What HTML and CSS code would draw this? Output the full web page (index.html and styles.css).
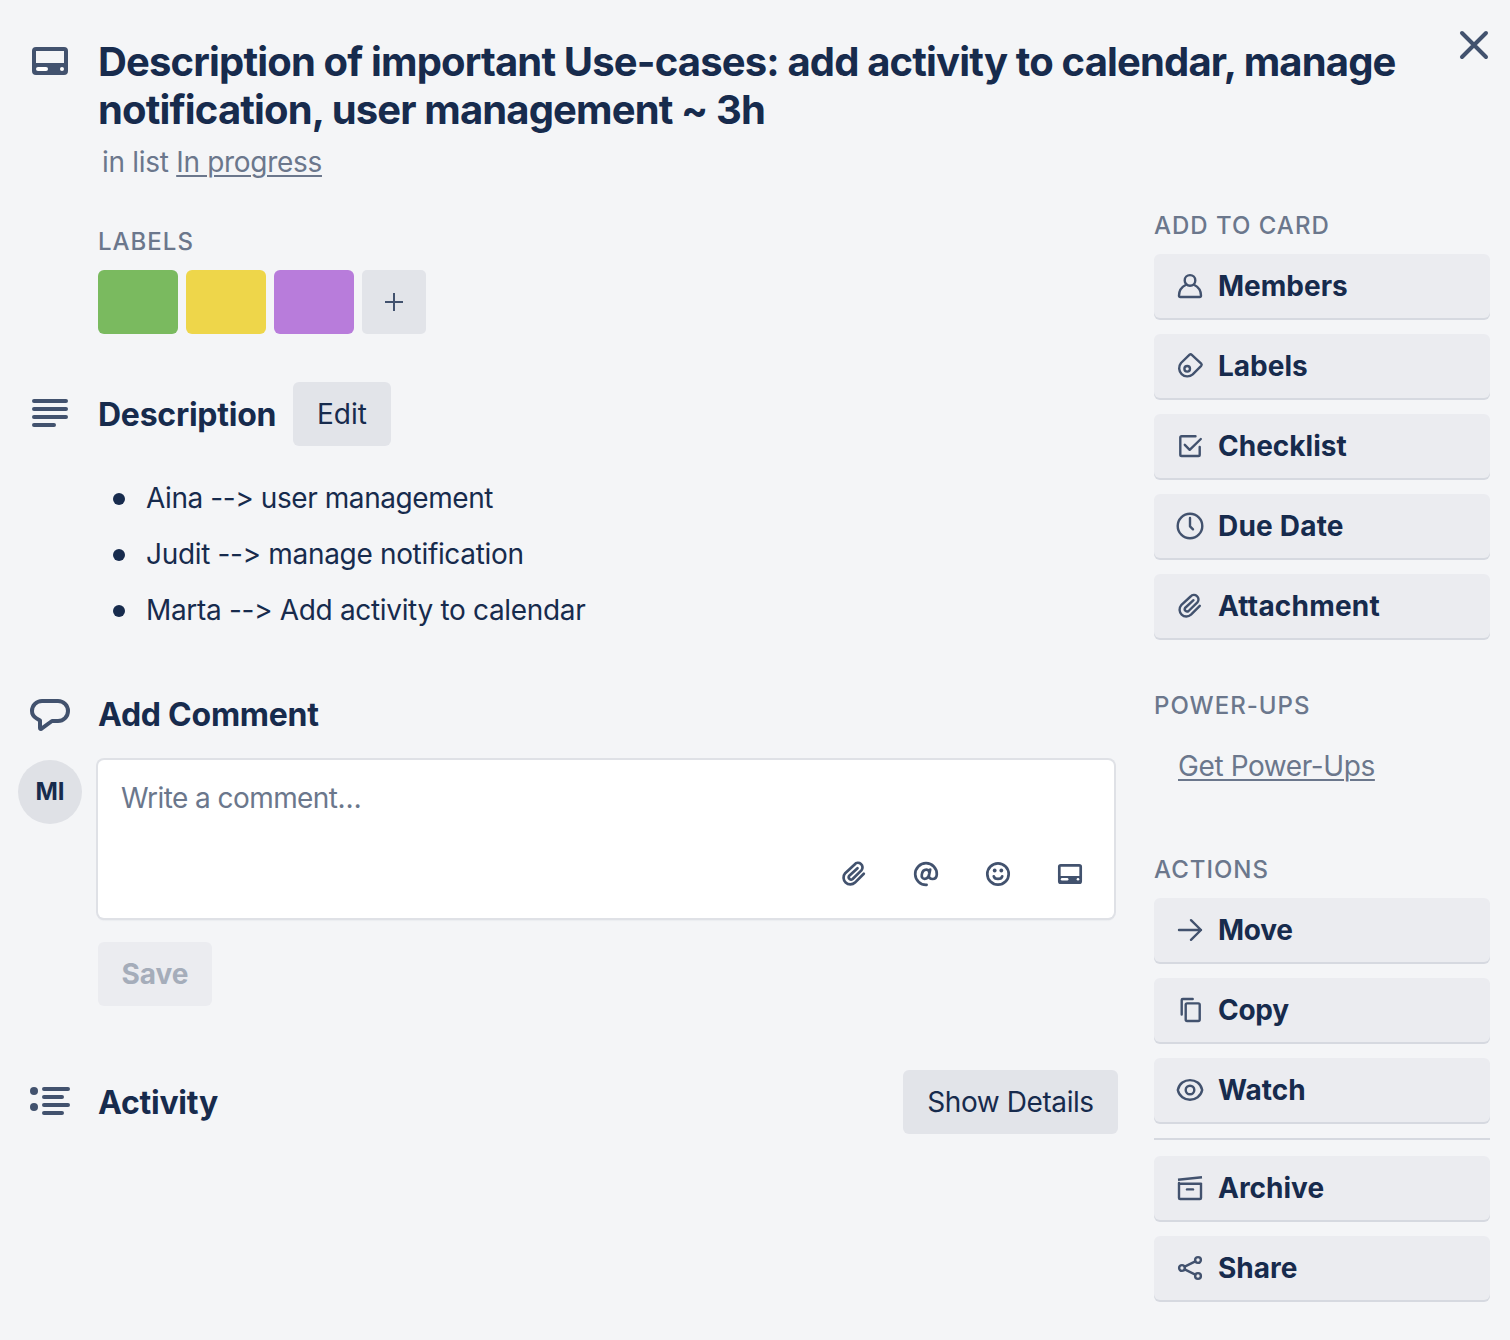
FILE: index.html
```html
<!DOCTYPE html>
<html lang="en">
<head>
<meta charset="utf-8">
<title>Card details</title>
<link rel="stylesheet" href="styles.css">
</head>
<body>
<svg class="sprite" aria-hidden="true">
  <symbol id="clip" viewBox="0 0 32 32"><path d="M25.8 15.8 17 24.6A6.8 6.8 0 0 1 7.2 15.2L16.6 6.5A4.5 4.5 0 0 1 23.4 12.4L14.6 21A2.4 2.4 0 0 1 11 18L19.5 10.2"/></symbol>
</svg>
<div class="card">
  <header class="header">
    <svg class="icon-lg" viewBox="0 0 48 48"><rect x="8" y="11" width="32" height="24" rx="2"/><path class="fill" d="M8 25h32v10H8z"/><path class="cut" d="M12 31h8"/><circle class="hole" cx="36" cy="31" r="2"/></svg>
    <div class="heading">
      <h1 class="title"><span class="line-a">Description of important Use-cases: add activity to calendar, manage</span> <br><span class="line-b">notification, user management ~ 3h</span></h1>
      <p class="in-list">in list <a class="link">In progress</a></p>
    </div>
    <svg class="close" viewBox="0 0 32 32"><path d="M4 4 28 28M28 4 4 28"/></svg>
  </header>
  <div class="columns">
    <main class="main">
      <section class="labels">
        <h3 class="caption">LABELS</h3>
        <div class="swatches">
          <span class="swatch green"></span><span class="swatch yellow"></span><span class="swatch purple"></span>
          <button class="add"><svg viewBox="0 0 32 32"><path d="M16 7V25M7 16H25"/></svg></button>
        </div>
      </section>
      <section class="description">
        <div class="section-head">
          <svg class="icon-lg" viewBox="0 0 48 48"><path d="M8 11H40M8 19H40M8 27H40M8 35H28"/></svg>
          <h2 class="h-desc">Description</h2>
          <button class="btn edit">Edit</button>
        </div>
        <ul class="list">
          <li><span class="li-a">Aina --&gt; user management</span></li>
          <li><span>Judit --&gt; manage notification</span></li>
          <li><span>Marta --&gt; Add activity to calendar</span></li>
        </ul>
      </section>
      <section class="comment">
        <div class="section-head">
          <svg class="icon-lg" viewBox="0 0 48 48"><path d="M16 11H32A10 10 0 0 1 32 31H26L15.2 38.8Q14 39.2 14 38V30.5L10.5 28.4C7.5 26.6 6 24 6 21A10 10 0 0 1 16 11Z"/></svg>
          <h2>Add Comment</h2>
        </div>
        <div class="comment-row">
          <span class="avatar">MI</span>
          <div class="editor">
            <p class="placeholder">Write a comment…</p>
            <div class="tools">
              <svg class="icon bold"><use href="#clip"/></svg>
              <svg class="icon bold" viewBox="0 0 32 32"><path d="M16.6 26.8A10.8 10.8 0 1 1 26.8 16.4C26.6 19.6 24.8 21 22.6 21C20 21 18.6 19.6 19 17.4L20.2 11.6M19.2 16C18.6 19 16.6 20.8 14.6 20.8C12.4 20.8 11.4 19 11.8 16.6C12.2 13.6 14 11.6 16.4 11.6C18.6 11.6 19.6 13.4 19.2 16Z"/></svg>
              <svg class="icon bold" viewBox="0 0 32 32"><circle cx="16" cy="16" r="10.7"/><circle class="dot" cx="12.7" cy="12.5" r="1.9"/><circle class="dot" cx="19.3" cy="12.5" r="1.9"/><path d="M11.8 18.4C12.6 21.8 19.4 21.8 20.2 18.4"/></svg>
              <svg class="icon bold" viewBox="0 0 32 32"><rect x="5.3" y="7.3" width="21.4" height="17.4" rx="1.5"/><path class="fill" d="M5.3 18h21.4v6.7H5.3z"/><path class="cut thin" d="M8 21.3h5.2"/><circle class="hole" cx="24" cy="21.3" r="1.3"/></svg>
            </div>
          </div>
        </div>
        <button class="btn save">Save</button>
      </section>
      <section class="activity section-head">
        <svg class="icon-lg" viewBox="0 0 48 48"><path d="M20 11H42M20 19H36M20 27H42M20 35H36M20 11h-2M20 19h-2M20 27h-2M20 35h-2"/><circle class="dot" cx="8" cy="13" r="4"/><circle class="dot" cx="8" cy="29" r="4"/></svg>
        <h2>Activity</h2>
        <button class="btn details">Show Details</button>
      </section>
    </main>
    <aside class="side">
      <h3 class="caption">ADD TO CARD</h3>
      <div class="stack">
        <button class="action"><svg class="icon" viewBox="0 0 32 32"><circle cx="16" cy="10.4" r="5.3"/><path d="M12 14.8C8 16.8 5 21 5 25.6Q5 27 6.4 27H25.6Q27 27 27 25.6C27 21 24 16.8 20 14.8"/></svg><span>Members</span></button>
        <button class="action"><svg class="icon" viewBox="0 0 32 32"><path d="M7 13 15.6 4.7Q16.7 3.8 17.8 4.8L27.2 13.6Q28.2 14.7 27.2 15.8L18.7 24.4A8.2 8.2 0 0 1 7 13Z"/><circle cx="13.2" cy="18.8" r="2.8"/></svg><span>Labels</span></button>
        <button class="action"><svg class="icon" viewBox="0 0 32 32"><path d="M21.5 6.3H7.6Q6.3 6.3 6.3 7.6V24.7Q6.3 26 7.6 26H24.4Q25.7 26 25.7 24.7V17M10.8 14.8 15.7 19.8 26.8 9"/></svg><span>Checklist</span></button>
        <button class="action wide"><svg class="icon" viewBox="0 0 32 32"><circle cx="16" cy="16" r="12.3"/><path d="M16 8V16.3L19 19.3"/></svg><span>Due Date</span></button>
        <button class="action wide"><svg class="icon"><use href="#clip"/></svg><span>Attachment</span></button>
      </div>
      <h3 class="caption cap-power">POWER-UPS</h3>
      <p class="power"><a class="link">Get Power-Ups</a></p>
      <h3 class="caption cap-actions">ACTIONS</h3>
      <div class="stack">
        <button class="action tight"><svg class="icon" viewBox="0 0 32 32"><path d="M5 16H27M17 6.2 27 16 17 25.8"/></svg><span>Move</span></button>
        <button class="action tight"><svg class="icon" viewBox="0 0 32 32"><path d="M18.7 5H8.8Q7.7 5 7.7 6.1V20.5"/><rect x="11.7" y="9.4" width="14" height="17.6" rx="1.4"/></svg><span>Copy</span></button>
        <button class="action"><svg class="icon" viewBox="0 0 32 32"><path d="M3.8 16C5.2 9.4 10.5 6.1 16 6.1S26.8 9.4 28.2 16C26.8 22.4 21.5 25.7 16 25.7S5.2 22.4 3.8 16Z"/><circle cx="16" cy="16" r="4.3"/></svg><span>Watch</span></button>
      </div>
      <hr class="rule">
      <div class="stack">
        <button class="action"><svg class="icon" viewBox="0 0 32 32"><path class="flat" d="M4 7.7 28 5.2M5 11.7H27V25.9Q27 27 25.9 27H6.1Q5 27 5 25.9V11ZM27 11V13"/><path d="M13 17.4H19"/></svg><span>Archive</span></button>
        <button class="action"><svg class="icon" viewBox="0 0 32 32"><circle cx="8" cy="16" r="2.9"/><circle cx="24" cy="8" r="2.9"/><circle cx="24" cy="24" r="2.9"/><path d="M10.7 14.6 21.3 9.4M10.7 17.4 21.3 22.6"/></svg><span>Share</span></button>
      </div>
    </aside>
  </div>
</div>
</body>
</html>
```
FILE: styles.css
```css
* { box-sizing: border-box; margin: 0; padding: 0; }
body { background: #f4f5f7; color: #172b4d; font: 400 28px/40px Inter, "Liberation Sans", sans-serif; white-space: nowrap; font-feature-settings: "calt" 0; }
button { border: 0; font: inherit; color: inherit; display: block; }
svg { display: block; flex: none; fill: none; stroke: #42526e; stroke-linecap: round; stroke-linejoin: round; }
.sprite { display: none; }
.card { width: 1510px; height: 1340px; padding: 38px 20px 0 18px; }
.fill, .dot { fill: #42526e; stroke: none; }
.hole { fill: #fff; stroke: none; }
.cut { stroke: #fff; }
.thin { stroke-width: 2.4; }
.icon-lg { width: 48px; height: 48px; margin: 0 24px 0 8px; stroke-width: 4; }
.icon { width: 32px; height: 32px; stroke-width: 2.4; }
.bold { stroke-width: 2.7; }
.flat { stroke-linecap: butt; }

.header { display: flex; height: 167px; }
.heading { flex: 1; }
.title { font-size: 40px; line-height: 48px; font-weight: 700; }
.line-a { letter-spacing: -.84px; }
.line-b { letter-spacing: -.86px; }
.in-list { margin: 8px 0 0 4px; color: #6b778c; letter-spacing: -.3px; }
.link { text-decoration: underline; text-decoration-thickness: 2px; text-underline-offset: 3px; color: #6b778c; }
.close { width: 32px; height: 32px; margin-top: -9px; stroke-width: 4; }
.columns { display: flex; justify-content: space-between; }
.main { width: 1100px; }
.side { width: 336px; }

.caption { font-size: 24px; line-height: 40px; font-weight: 500; letter-spacing: 1px; color: #6b778c; padding-top: 1px; margin-bottom: 8px; }
.labels { padding: 16px 0 0 80px; }
.swatches { display: flex; gap: 8px; }
.swatch { width: 80px; height: 64px; border-radius: 6px; }
.green { background: #7aba5f; }
.yellow { background: #eed64a; }
.purple { background: #b87cdb; }
.add { width: 64px; height: 64px; border-radius: 5px; background: #e2e4e9; }
.add svg { width: 32px; height: 32px; margin: 0 auto; stroke-width: 2; stroke-linecap: butt; }

.section-head { display: flex; height: 64px; align-items: center; }
.section-head h2 { font-size: 32px; line-height: 40px; font-weight: 700; padding-top: 2px; letter-spacing: -.25px; }
.btn { height: 64px; border-radius: 6px; background: #e2e4e9; text-align: center; }
.description { margin-top: 48px; }
.edit { width: 98px; margin-left: 16px; }
.h-desc { width: 179px; }
.list { list-style: none; margin-top: 24px; padding-left: 95px; }
.list li { display: flex; align-items: center; gap: 21px; height: 56px; letter-spacing: -.33px; }
.list li::before { content: ""; width: 12px; height: 12px; margin-top: 2px; border-radius: 50%; background: #172b4d; }
.li-a { letter-spacing: -.42px; }
.comment { margin-top: 44px; }
.comment-row { display: flex; gap: 16px; margin-top: 14px; }
.avatar { width: 64px; height: 64px; border-radius: 50%; background: #dfe1e6; font-size: 24px; line-height: 64px; font-weight: 700; text-align: center; }
.editor { width: 1016px; height: 158px; border-radius: 6px; background: #fff; padding: 18px 28px 28px 23px; display: flex; flex-direction: column; justify-content: space-between; box-shadow: 0 0 0 2px #dfe1e6, 0 2px 2px rgba(9,30,66,.12); }
.placeholder { color: #6b778c; letter-spacing: -.57px; }
.tools { display: flex; gap: 40px; justify-content: flex-end; }
.save { width: 114px; margin: 24px 0 0 80px; background: #ebecf0; color: #a5adba; font-weight: 700; }
.activity { margin-top: 64px; }
.details { width: 215px; margin-left: auto; letter-spacing: -.42px; }

.stack { display: grid; gap: 16px; }
.action { display: flex; align-items: center; gap: 12px; width: 336px; height: 64px; padding-left: 20px; border-radius: 6px; background: #ebecf0; box-shadow: 0 2px 0 #d6d9e0; font-weight: 700; }
.wide { letter-spacing: .2px; }
.tight { letter-spacing: -.3px; }
.cap-power { margin-top: 47px; }
.power { margin: 20px 0 0 24px; letter-spacing: -.4px; }
.cap-actions { margin-top: 63px; }
.rule { height: 2px; border: 0; background: #d6d9e0; margin: 16px 0; }
```
